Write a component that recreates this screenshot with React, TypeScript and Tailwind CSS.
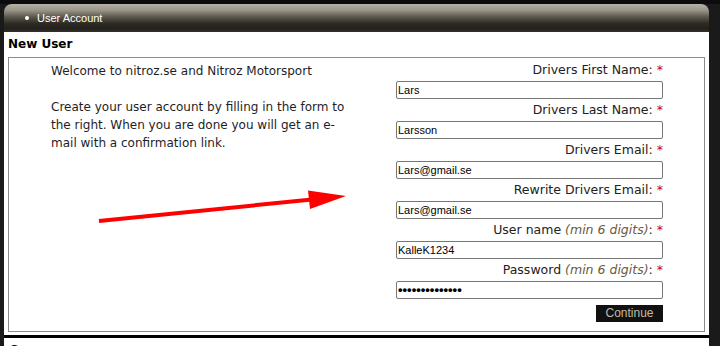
import * as React from 'react';

const fields = [
  { label: 'Drivers First Name', hint: '', value: 'Lars' },
  { label: 'Drivers Last Name', hint: '', value: 'Larsson' },
  { label: 'Drivers Email', hint: '', value: 'Lars@gmail.se' },
  { label: 'Rewrite Drivers Email', hint: '', value: 'Lars@gmail.se' },
  { label: 'User name', hint: '(min 6 digits)', value: 'KalleK1234' },
  { label: 'Password', hint: '(min 6 digits)', value: '••••••••••••••' },
];

function FormRow({ label, hint, value }: { label: string; hint: string; value: string }) {
  const isPassword = label === 'Password';
  return (
    <div className="flex flex-col">
      <div className="h-[22px] leading-[22px] text-right text-[12.5px] text-[#222] whitespace-nowrap">
        {label}
        {hint && <i className="text-[#6b5a3a]"> {hint}</i>}: <span className="text-[#d00000]">*</span>
      </div>
      <input
        readOnly
        value={value}
        className={
          'h-[18px] w-[267px] rounded-[2px] border border-[#777] bg-white px-[1px] text-black outline-none ' +
          (isPassword ? 'text-[13px] font-bold tracking-[0px]' : 'text-[11px]')
        }
        style={{ fontFamily: '"Liberation Sans", Arial, sans-serif' }}
      />
    </div>
  );
}

export default function App() {
  return (
    <div
      className="relative h-[346px] w-[720px] overflow-hidden bg-[#1a1a1a] pl-[4px] pt-[4px]"
      style={{ fontFamily: '"DejaVu Sans", Verdana, sans-serif' }}
    >
      <div className="absolute left-0 top-0 h-[4px] w-[720px] bg-[#0c0c0c]" />
      <div className="relative w-[705px]">
        {/* header bar */}
        <div className="flex h-[28px] items-center rounded-t-[8px] bg-[linear-gradient(to_bottom,#b6b2a6_0%,#9a968a_22%,#5e5a50_45%,#2c2a23_70%,#23211b_88%,#34322b_100%)] pl-[21px]">
          <span className="mr-[8px] inline-block size-[4px] rounded-full bg-white" />
          <span
            className="text-[11px] text-white"
            style={{ fontFamily: '"Liberation Sans", Arial, sans-serif' }}
          >
            User Account
          </span>
        </div>

        <div className="bg-white">
          <h2 className="h-[25px] pl-[4px] pt-[4px] text-[12px] font-bold leading-[16px] text-black">New User</h2>

          <div className="mx-[4px] flex h-[275px] justify-between border border-[#8c8c8c]">
            <div className="pl-[42px] pt-[4px] text-[12px] leading-[18px] text-[#1e1e28] whitespace-nowrap">
              Welcome to nitroz.se and Nitroz Motorsport
              <br />
              <br />
              Create your user account by filling in the form to
              <br />
              the right. When you are done you will get an e-
              <br />
              mail with a confirmation link.
            </div>

            <div className="flex flex-col pr-[41px] pt-[1px]">
              {fields.map((f) => (
                <FormRow key={f.label} {...f} />
              ))}
              <div className="mt-[6px] flex justify-end">
                <button
                  className="h-[17px] w-[67px] bg-[#111] text-[12px] leading-[17px] text-[#c2bca8]"
                  style={{ fontFamily: '"Liberation Sans", Arial, sans-serif' }}
                >
                  Continue
                </button>
              </div>
            </div>
          </div>

          <div className="h-[3px]" />
          <div className="h-[3px] bg-black" />
          <h2 className="h-[20px] pl-[6px] pt-[4px] text-[12px] font-bold leading-[16px] text-black">Sponsorer</h2>
        </div>
      </div>

      {/* red arrow */}
      <svg className="pointer-events-none absolute left-0 top-0" width="720" height="346" viewBox="0 0 720 346">
        <line x1="99" y1="221" x2="312" y2="199.5" stroke="#ff0000" strokeWidth="4" />
        <polygon points="346,196 308,190.5 310,209" fill="#ff0000" />
      </svg>
    </div>
  );
}
